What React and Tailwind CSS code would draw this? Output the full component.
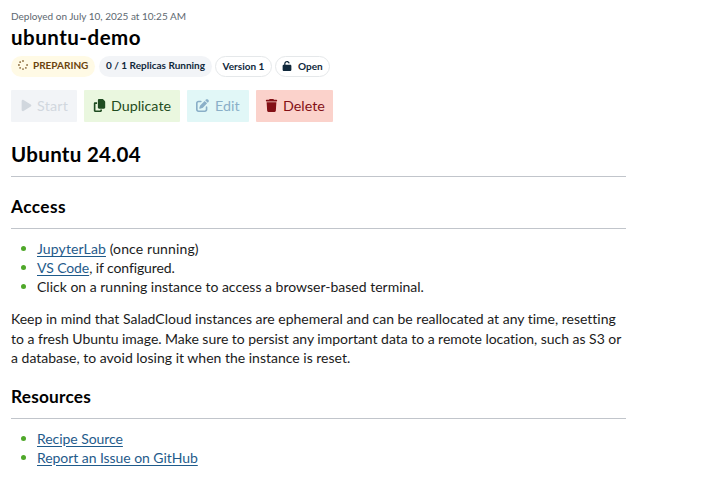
import { FaSpinner, FaPlay, FaCopy, FaPenToSquare, FaTrash, FaUnlock } from "react-icons/fa6";

function Badge({ className, children }) {
  return <span className={"flex h-[21px] items-center rounded-full text-[10px] leading-none font-bold whitespace-nowrap " + className}>{children}</span>;
}

function Action({ className, icon, label }) {
  return (
    <button className={"flex h-8 items-center rounded-[1px] pl-[9px] text-[14.3px] whitespace-nowrap " + className}>
      {icon}
      <span>{label}</span>
    </button>
  );
}

function Item({ className = "", children }) {
  return (
    <li className={"flex h-[19px] items-center " + className}>
      <span className="mr-[11px] ml-[10px] size-[5px] shrink-0 rounded-full bg-[#4fa82a]" />
      <span className="whitespace-pre">{children}</span>
    </li>
  );
}

function Link({ children }) {
  return <a href="#" className="text-[#1f5b8b] underline underline-offset-2">{children}</a>;
}

export default function App() {
  return (
    <main className="h-[486px] w-[714px] overflow-hidden bg-white pl-[11px] font-['Lato','Liberation_Sans',sans-serif] text-[14px] text-[#1b1b1b] [font-variant-ligatures:none]">
      <p className="pt-[9px] text-[10px] leading-[15px] text-[#5d6870]">Deployed on July 10, 2025 at 10:25 AM</p>
      <h1 className="h-[32px] text-[20.5px] leading-[26px] font-bold tracking-[0.5px] text-black">ubuntu-demo</h1>
      <div className="flex h-[21px] items-center">
        <Badge className="mr-1 w-[84px] bg-[#fffae5] pb-[4px] pl-[7px] text-[#6b430d]"><FaSpinner className="mr-[5px] size-[10px] opacity-75" />PREPARING</Badge>
        <Badge className="mr-[3px] w-[113px] justify-center bg-[#f2f4f7] pb-[4px] text-[#10283c]">0 / 1 Replicas Running</Badge>
        <Badge className="mr-[3px] w-[57px] justify-center border border-[#e5e8ea] pb-[2px] text-[#10283c]">Version 1</Badge>
        <Badge className="w-[55px] border border-[#e5e8ea] pb-[2px] pl-[6px] text-[#10283c]"><FaUnlock className="mr-[6px] size-[10px]" />Open</Badge>
      </div>
      <div className="mt-[13px] flex">
        <Action className="mr-[7px] w-[66px] bg-[#f2f4f7] tracking-[0.2px] text-[#d1d7de]" icon={<FaPlay className="mr-[4px] mb-[1px] size-[13px]" />} label="Start" />
        <Action className="mr-[7px] w-24 bg-[#eaf7df] text-[#1f4c21]" icon={<FaCopy className="mr-[5px] mb-[2px] size-[13px]" />} label="Duplicate" />
        <Action className="mr-[7px] w-[62px] bg-[#e1f7f7] text-[#8aafc8]" icon={<FaPenToSquare className="mr-[6px] mb-[2px] size-[13px]" />} label="Edit" />
        <Action className="w-[77px] bg-[#fbd2cb] text-[#831015]" icon={<FaTrash className="mr-[5px] mb-[2px] size-[13px]" />} label="Delete" />
      </div>
      <article className="w-[615px]">
        <h2 className="mt-[21px] h-[34px] border-b border-[#c1c5cb] text-[20.5px] leading-[22px] font-bold tracking-[0.3px] text-black">Ubuntu 24.04</h2>
        <h3 className="mt-[19px] h-[33px] border-b border-[#c1c5cb] text-[17.3px] leading-[21px] font-bold tracking-[0.4px] text-black">Access</h3>
        <ul className="mt-[10px]">
          <Item className="tracking-[0.12px]"><Link>JupyterLab</Link><span> (once running)</span></Item>
          <Item className="tracking-[-0.1px]"><Link>VS Code</Link><span>, if configured.</span></Item>
          <Item>Click on a running instance to access a browser-based terminal.</Item>
        </ul>
        <p className="mt-[13px] leading-[19.5px] whitespace-nowrap">
          <span className="block tracking-[-0.01px]">Keep in mind that SaladCloud instances are ephemeral and can be reallocated at any time, resetting</span>
          <span className="block tracking-[-0.03px]">to a fresh Ubuntu image. Make sure to persist any important data to a remote location, such as S3 or</span>
          <span className="block">a database, to avoid losing it when the instance is reset.</span>
        </p>
        <h3 className="mt-[18px] h-[33px] border-b border-[#c1c5cb] text-[17.3px] leading-[21px] font-bold tracking-[0.2px] text-black">Resources</h3>
        <ul className="mt-[10px]">
          <Item className="tracking-[-0.06px]"><Link>Recipe Source</Link></Item>
          <Item className="tracking-[-0.06px]"><Link>Report an Issue on GitHub</Link></Item>
        </ul>
      </article>
    </main>
  );
}
